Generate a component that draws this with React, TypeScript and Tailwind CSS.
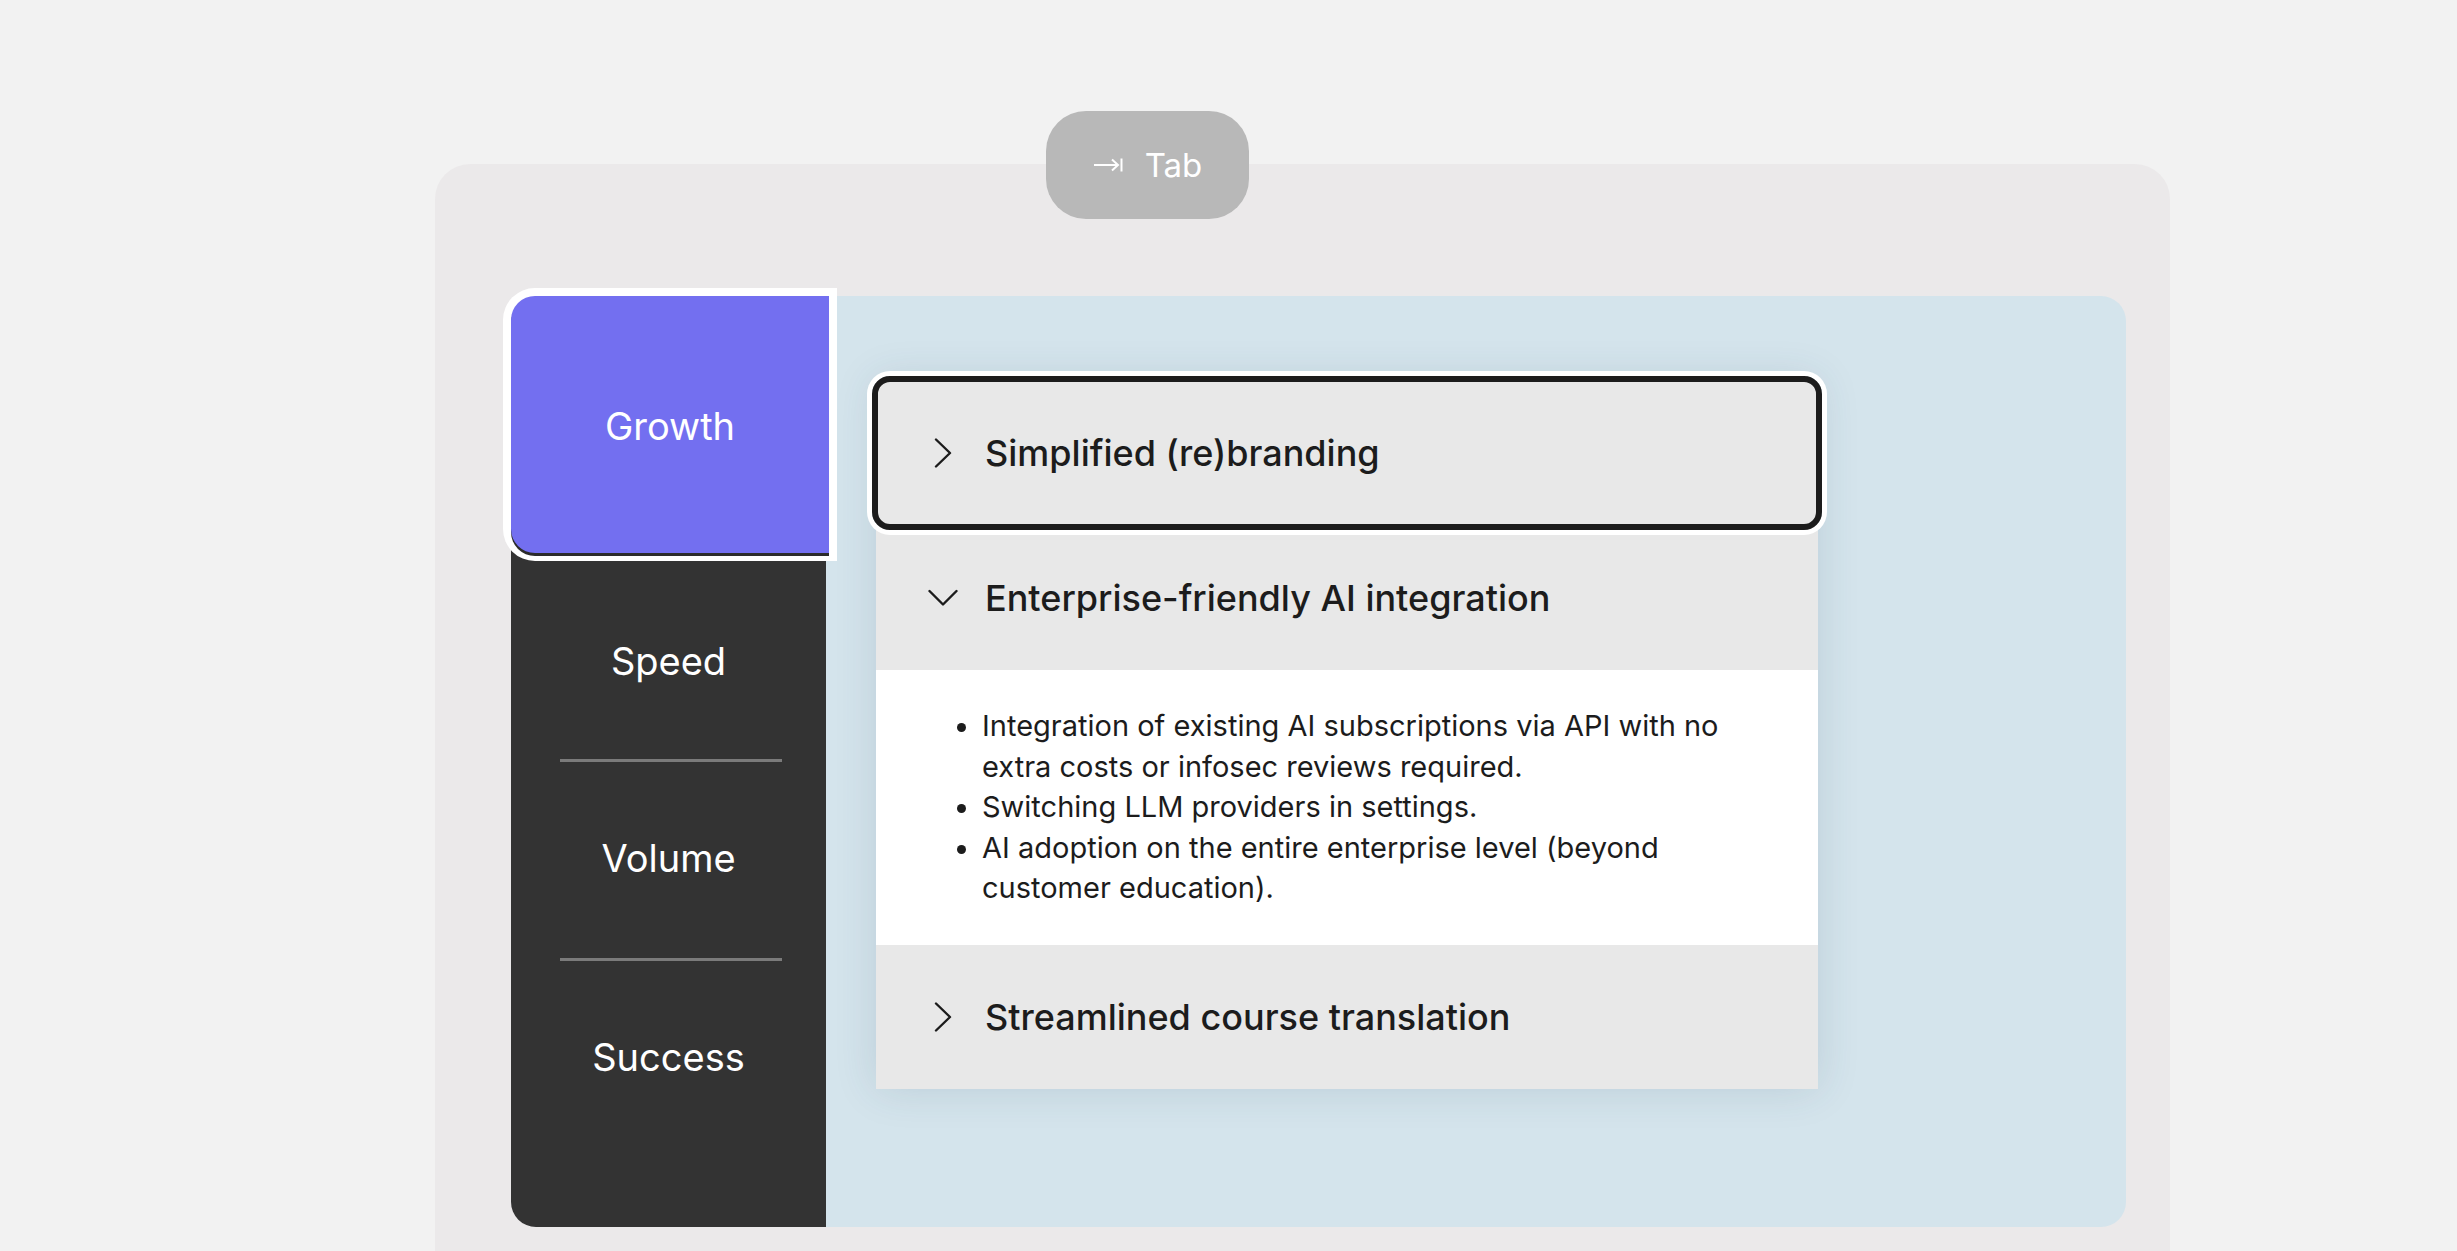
import React from "react";

function ChevronRight() {
  return (
    <svg width="30" height="30" viewBox="0 0 30 30" fill="none" className="shrink-0">
      <polyline points="8,1.5 22,15 8,28.5" stroke="#1c1c1c" strokeWidth="2.4" strokeLinecap="round" strokeLinejoin="round" />
    </svg>
  );
}

function ChevronDown() {
  return (
    <svg width="30" height="30" viewBox="0 0 30 30" fill="none" className="shrink-0">
      <polyline points="1.5,8 15,21.5 28.5,8" stroke="#1c1c1c" strokeWidth="2.4" strokeLinecap="round" strokeLinejoin="round" />
    </svg>
  );
}

function TabKeyIcon() {
  return (
    <svg width="30" height="18" viewBox="0 0 30 18" fill="none">
      <line x1="1" y1="9" x2="25" y2="9" stroke="white" strokeWidth="2" />
      <polyline points="19,3.5 25,9 19,14.5" stroke="white" strokeWidth="2" fill="none" />
      <line x1="28.5" y1="2.5" x2="28.5" y2="15.5" stroke="white" strokeWidth="2" />
    </svg>
  );
}

const tabs = ["Speed", "Volume", "Success"];

const bullets = [
  "Integration of existing AI subscriptions via API with no extra costs or infosec reviews required.",
  "Switching LLM providers in settings.",
  "AI adoption on the entire enterprise level (beyond customer education).",
];

export default function App() {
  return (
    <div className="w-full h-[1251px] overflow-hidden bg-[#f2f2f2] font-['Inter',sans-serif] pt-[164px] pl-[435px]">
      <div className="relative w-[1735px] h-[1150px] rounded-t-[35px] bg-[#ebe9ea] pt-[132px] pl-[76px] pr-[44px]">
        {/* keyboard hint */}
        <div className="absolute left-[611px] top-[-53px] w-[203px] h-[108px] rounded-[40px] bg-[#b8b8b8] flex items-center justify-center gap-[22px]">
          <TabKeyIcon />
          <span className="text-white text-[33px] leading-none">Tab</span>
        </div>

        <div className="flex h-[931px]">
          {/* sidebar tabs */}
          <div className="w-[315px] shrink-0 bg-[#333333] rounded-l-[25px] flex flex-col">
            <button className="relative z-10 w-[318px] h-[257px] shrink-0 bg-[#736ff0] rounded-l-[24px] shadow-[0_3px_0_0_#2b2b2b,0_0_0_8px_#ffffff] flex items-center justify-center pt-[3px] text-white text-[38px]">
              Growth
            </button>
            <div className="h-[206px] shrink-0 flex items-center justify-center pt-[10px] text-white text-[38px]">
              {tabs[0]}
            </div>
            <div className="h-[3px] ml-[49px] mr-[44px] bg-[#7b7b7b]" />
            <div className="h-[196px] shrink-0 flex items-center justify-center pb-[4px] text-white text-[38px]">
              {tabs[1]}
            </div>
            <div className="h-[3px] ml-[49px] mr-[44px] bg-[#7b7b7b]" />
            <div className="h-[194px] shrink-0 flex items-center justify-center pb-[2px] text-white text-[38px]">
              {tabs[2]}
            </div>
          </div>

          {/* accordion area */}
          <div className="flex-1 bg-[#d4e4ec] rounded-r-[25px] pl-[50px] pt-[84px]">
            <div className="w-[942px] shadow-[0_0_40px_rgba(40,70,90,0.14)]">
              <div className="relative z-10 h-[146px] bg-[#e8e8e8] flex items-center pl-[52px] gap-[27px]">
                <div className="absolute -inset-[4px] rounded-[18px] border-[6px] border-[#1c1c1c] shadow-[0_0_0_5px_#ffffff]" />
                <ChevronRight />
                <span className="text-[36px] font-medium text-[#1c1c1c]">Simplified (re)branding</span>
              </div>
              <div className="h-[144px] bg-[#e8e8e8] flex items-center pl-[52px] gap-[27px]">
                <ChevronDown />
                <span className="text-[36px] font-medium text-[#1c1c1c]">Enterprise-friendly AI integration</span>
              </div>
              <div className="bg-white py-[36px] pl-[106px] pr-[58px]">
                <ul className="list-disc text-[29px] leading-[40.5px] text-[#1c1c1c]">
                  {bullets.map((b) => (
                    <li key={b}>{b}</li>
                  ))}
                </ul>
              </div>
              <div className="h-[144px] bg-[#e8e8e8] flex items-center pl-[52px] gap-[27px]">
                <ChevronRight />
                <span className="text-[36px] font-medium text-[#1c1c1c]">Streamlined course translation</span>
              </div>
            </div>
          </div>
        </div>
      </div>
    </div>
  );
}
